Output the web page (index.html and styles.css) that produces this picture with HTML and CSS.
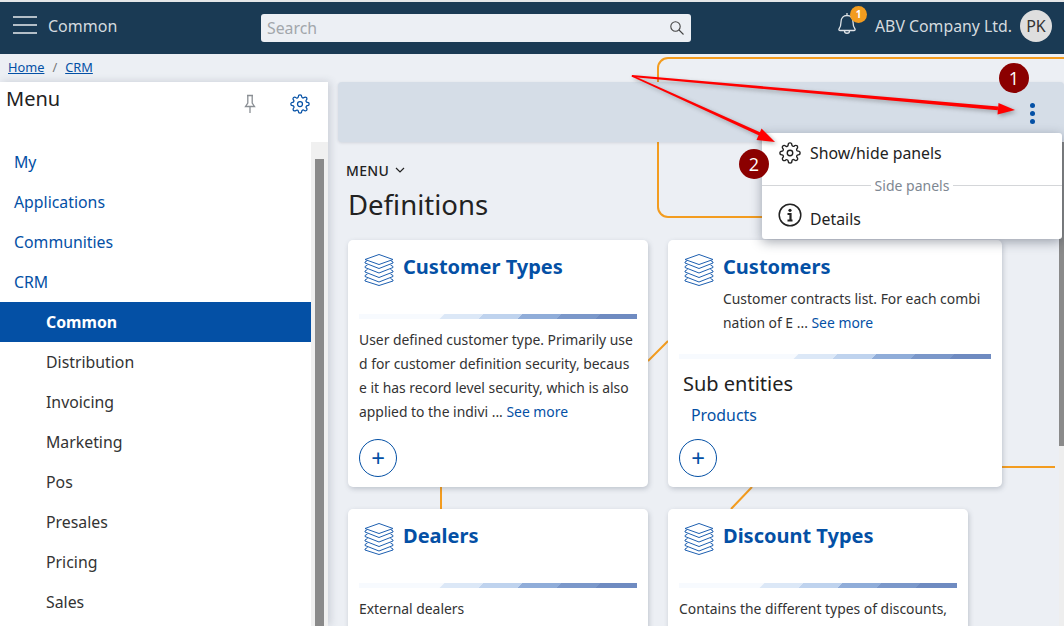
FILE: index.html
```html
<!DOCTYPE html>
<html>
<head>
  <meta charset="utf-8">
  <title>Common - Definitions</title>
  <link rel="stylesheet" href="styles.css">
</head>
<body>
  <svg class="icon-defs" width="0" height="0">
    <symbol id="gear" viewBox="0 0 24 24">
      <circle cx="12" cy="12" r="3"/>
      <path d="M19.4 15a1.65 1.65 0 0 0 .33 1.82l.06.06a2 2 0 0 1 0 2.83 2 2 0 0 1-2.83 0l-.06-.06a1.65 1.65 0 0 0-1.82-.33 1.65 1.65 0 0 0-1 1.51V21a2 2 0 0 1-2 2 2 2 0 0 1-2-2v-.09A1.65 1.65 0 0 0 9 19.4a1.65 1.65 0 0 0-1.82.33l-.06.06a2 2 0 0 1-2.83 0 2 2 0 0 1 0-2.83l.06-.06a1.65 1.65 0 0 0 .33-1.82 1.65 1.65 0 0 0-1.51-1H3a2 2 0 0 1-2-2 2 2 0 0 1 2-2h.09A1.65 1.65 0 0 0 4.6 9a1.65 1.65 0 0 0-.33-1.82l-.06-.06a2 2 0 0 1 0-2.83 2 2 0 0 1 2.83 0l.06.06a1.65 1.65 0 0 0 1.82.33H9a1.65 1.65 0 0 0 1-1.51V3a2 2 0 0 1 2-2 2 2 0 0 1 2 2v.09a1.65 1.65 0 0 0 1 1.51 1.65 1.65 0 0 0 1.82-.33l.06-.06a2 2 0 0 1 2.83 0 2 2 0 0 1 0 2.83l-.06.06a1.65 1.65 0 0 0-.33 1.82V9a1.65 1.65 0 0 0 1.51 1H21a2 2 0 0 1 2 2 2 2 0 0 1-2 2h-.09a1.65 1.65 0 0 0-1.51 1z"/>
    </symbol>
    <symbol id="stack" viewBox="0 0 30 32">
      <path d="M15 .5 29 5.5 15 10.500 1 5.500z"/>
      <path d="M3.500 6.500 1 8v1L15 14.500 29 9V8L26.500 6.500"/>
      <path d="M3.500 11 1 12.500v1L15 19 29 13.500v-1L26.500 11"/>
      <path d="M3.500 15.500 1 17v1L15 23.500 29 18v-1L26.500 15.500"/>
      <path d="M3.500 20 1 21.500v1L15 28 29 22.500v-1L26.500 20"/>
      <path d="M3.500 24.500 1 26v1L15 31.500 29 27v-1L26.500 24.500"/>
    </symbol>
  </svg>

  <!-- connector lines behind the cards -->
  <svg class="connectors" width="1064" height="626">
    <rect x="658" y="58" width="440" height="159" rx="10"/>
    <path d="M648 361 668 341M441 487V509M731 509 752 487M1002 467H1055"/>
  </svg>

  <header class="topbar">
    <div class="burger"><span></span><span></span><span></span></div>
    <div class="topbar-title">Common</div>
    <div class="search">
      <input type="text" placeholder="Search">
      <svg width="16" height="16" viewBox="0 0 16 16"><circle cx="6.500" cy="6.500" r="4.700"/><path d="M10 10l4.500 4.500"/></svg>
    </div>
    <div class="bell">
      <svg width="24" height="26" viewBox="0 3 24 26"><path d="M4 19c1.500-2 2-3.500 2-7 0-4 2.500-6.500 6-6.500s6 2.500 6 6.500c0 3.500.5 5 2 7 .5 1-.2 1.500-1 1.500H5c-.8 0-1.500-.5-1-1.500zM9.500 21c0 3 5 3 5 0M12 5.500V3"/></svg>
      <span class="bell-count">1</span>
    </div>
    <div class="company">ABV Company Ltd.</div>
    <div class="avatar">PK</div>
  </header>

  <nav class="crumbs"><a href="#">Home</a><span>/</span><a href="#">CRM</a></nav>

  <div class="page">
    <aside class="sidebar">
      <div class="side-head">
        <h2>Menu</h2>
        <svg class="pin" width="14" height="20" viewBox="0 0 14 20"><path d="M4 1.500h6M4.800 1.500V9L2.500 12.500h9L9.200 9V1.500M7 12.500V19"/></svg>
        <svg class="side-gear" width="20" height="20"><use href="#gear"/></svg>
      </div>
      <div class="side-body">
        <ul class="side-list">
          <li class="top">My</li>
          <li class="top">Applications</li>
          <li class="top">Communities</li>
          <li class="top">CRM</li>
          <li class="sub active">Common</li>
          <li class="sub">Distribution</li>
          <li class="sub">Invoicing</li>
          <li class="sub">Marketing</li>
          <li class="sub">Pos</li>
          <li class="sub">Presales</li>
          <li class="sub">Pricing</li>
          <li class="sub">Sales</li>
        </ul>
        <div class="side-scroll"><div class="side-thumb"></div></div>
      </div>
    </aside>

    <main class="main">
      <div class="panel-bar">
        <div class="dots"><i></i><i></i><i></i></div>
      </div>
      <div class="workspace">
        <div class="content">
          <div class="menu-link">MENU
            <svg width="10" height="6" viewBox="0 0 10 6"><path d="M1 1l4 4 4-4"/></svg>
          </div>
          <h1>Definitions</h1>
          <div class="cards">
            <section class="card">
              <div class="card-head">
                <svg class="stack" width="30" height="32"><use href="#stack"/></svg>
                <div class="card-titles"><h3>Customer Types</h3></div>
              </div>
              <div class="strip"></div>
              <p class="desc">User defined customer type. Primarily used for customer definition security, because it has record level security, which is also applied to the indivi ... <a href="#">See more</a></p>
              <button class="add">+</button>
            </section>

            <section class="card wide">
              <div class="card-head">
                <svg class="stack" width="30" height="32"><use href="#stack"/></svg>
                <div class="card-titles">
                  <h3>Customers</h3>
                  <p class="desc short">Customer contracts list. For each combination of E ... <a href="#">See more</a></p>
                </div>
              </div>
              <div class="strip"></div>
              <h4>Sub entities</h4>
              <a class="sub-link" href="#">Products</a>
              <button class="add">+</button>
            </section>

            <section class="card">
              <div class="card-head">
                <svg class="stack" width="30" height="32"><use href="#stack"/></svg>
                <div class="card-titles"><h3>Dealers</h3></div>
              </div>
              <div class="strip"></div>
              <p class="desc">External dealers</p>
            </section>

            <section class="card">
              <div class="card-head">
                <svg class="stack" width="30" height="32"><use href="#stack"/></svg>
                <div class="card-titles"><h3>Discount Types</h3></div>
              </div>
              <div class="strip"></div>
              <p class="desc">Contains the different types of discounts,</p>
            </section>
          </div>
        </div>
        <div class="main-scroll"><div class="main-thumb"></div></div>
      </div>
    </main>
  </div>

  <div class="popup">
    <div class="popup-item">
      <svg width="22" height="22"><use href="#gear"/></svg>
      <span>Show/hide panels</span>
    </div>
    <div class="popup-sep"><span>Side panels</span></div>
    <div class="popup-item details">
      <svg width="24" height="24" viewBox="0 0 24 24"><circle cx="12" cy="12" r="10.800"/><circle class="fill" cx="12" cy="7.300" r="1.600"/><path class="thick" d="M9.500 11h3v6.500M9.500 17.500h5"/></svg>
      <span>Details</span>
    </div>
  </div>

  <!-- screenshot annotations -->
  <svg class="arrows" width="1064" height="626">
    <path d="M632 75 998.200 106.600 997.800 110.200 632 77z"/>
    <path d="M632 75 762.800 133.400 761.300 136.600 631.500 76.500z"/>
    <path d="M1015 110 997.500 114.500 998.500 103z"/>
    <path d="M775 142 756.500 140 761.500 128.500z"/>
  </svg>
  <div class="mark mark-one">1</div>
  <div class="mark mark-two">2</div>
</body>
</html>
```

FILE: styles.css
```css
* {
  box-sizing: border-box;
}
html, body {
  height: 100%;
  margin: 0;
}
body {
  position: relative;
  overflow: hidden;
  background: #eceff4;
  color: #222;
  font-family: "Noto Sans", sans-serif;
  font-size: 15.84px;
}
a {
  color: #0450a5;
  text-decoration: none;
}
.icon-defs {
  position: absolute;
}
#gear, .side-gear, .popup-item svg {
  fill: none;
  stroke: currentColor;
  stroke-width: 1.500;
}

.connectors {
  position: absolute;
  left: 0;
  top: 0;
  fill: none;
  stroke: #f39c1f;
  stroke-width: 2;
}

/* top bar */
.topbar {
  position: relative;
  display: flex;
  align-items: center;
  height: 54px;
  padding-bottom: 4px;
  border-top: 2px solid #e4e6e8;
  background: #1a3a54;
  color: #d5dadf;
}
.burger {
  display: flex;
  flex-direction: column;
  gap: 6px;
  width: 24px;
  margin: 0 0 2px 13px;
}
.burger span {
  height: 2px;
  background: #b4bec7;
}
.topbar-title {
  width: 213px;
  margin-left: 11px;
  font-size: 16px;
}
.search {
  display: flex;
  align-items: center;
  width: 430px;
  height: 28px;
  margin-top: 4px;
  border-radius: 3px;
  background: #eceff4;
  padding: 0 6px;
}
.search input {
  flex: 1;
  min-width: 0;
  padding: 0;
  border: 0;
  outline: 0;
  background: none;
  font-family: inherit;
  font-size: 15.84px;
}
.search input::placeholder {
  color: #a2a6ab;
  opacity: 1;
}
.search svg {
  fill: none;
  stroke: #444;
  stroke-width: 1.100;
}
.bell {
  position: relative;
  width: 24px;
  height: 26px;
  margin-left: 144px;
}
.bell svg {
  fill: none;
  stroke: #dfe3e7;
  stroke-width: 1.300;
}
.bell-count {
  position: absolute;
  left: 15px;
  top: -7px;
  width: 17px;
  height: 17px;
  border-radius: 50%;
  background: #f39c1f;
  color: #fff;
  font-size: 10px;
  font-weight: 700;
  line-height: 17px;
  text-align: center;
}
.company {
  margin-left: 16px;
  white-space: nowrap;
}
.avatar {
  width: 32px;
  height: 32px;
  margin-left: 8px;
  border-radius: 50%;
  background: #dedede;
  color: #333;
  font-size: 16px;
  line-height: 32px;
  text-align: center;
}

/* breadcrumb */
.crumbs {
  position: relative;
  display: flex;
  align-items: center;
  gap: 8px;
  height: 28px;
  padding: 0 0 2px 8px;
  font-size: 12.8px;
}
.crumbs a {
  text-decoration: underline;
}
.crumbs span {
  color: #777;
}

.page {
  position: relative;
  display: flex;
  height: 544px;
}

/* left menu */
.sidebar {
  flex: none;
  width: 328px;
  background: #fff;
  box-shadow: 2px 0 8px rgba(60, 70, 90, .2);
  z-index: 1;
}
.side-head {
  display: flex;
  align-items: flex-start;
  height: 60px;
}
.side-head h2 {
  width: 237px;
  margin: 3px 0 0 6px;
  font-size: 20px;
  font-weight: 400;
  line-height: 28px;
}
.pin {
  margin-top: 12px;
  fill: none;
  stroke: #8a8f94;
  stroke-width: 1.300;
}
.side-gear {
  margin: 12px 0 0 33px;
  color: #0450a5;
}
.side-body {
  display: flex;
  height: 484px;
}
.side-list {
  flex: 1;
  margin: 0;
  padding: 0;
  list-style: none;
}
.side-list li {
  height: 40px;
  line-height: 40px;
}
.top {
  padding-left: 14px;
  color: #0450a5;
}
.sub {
  padding-left: 46px;
  color: #333;
}
.sub.active {
  background: #0450a5;
  color: #fff;
  font-weight: 700;
}
.side-scroll {
  width: 17px;
  padding: 17px 4px 0;
  background: #f0f0f0;
}
.side-thumb {
  height: 100%;
  background: #8a8a8a;
}

/* main area */
.main {
  display: flex;
  flex-direction: column;
  flex: 1;
  min-width: 0;
  margin-left: 10px;
}
.panel-bar {
  position: relative;
  flex: none;
  height: 60px;
  border-radius: 4px;
  background: #d5dde7;
  box-shadow: 0 1px 3px rgba(60, 70, 90, .15);
}
.dots {
  position: absolute;
  right: 29px;
  top: 21px;
  display: flex;
  flex-direction: column;
  gap: 3px;
}
.dots i {
  width: 5px;
  height: 5px;
  border-radius: 50%;
  background: #0450a5;
}
.workspace {
  display: flex;
  flex: 1;
  min-height: 0;
}
.content {
  flex: 1;
  min-width: 0;
  overflow: hidden;
  padding: 17px 0 0 8px;
}
.main-scroll {
  flex: none;
  width: 5px;
  background: #eee;
}
.main-thumb {
  height: 304px;
  background: #8a8a8a;
}
.menu-link {
  display: flex;
  align-items: center;
  gap: 6px;
  height: 22px;
  font-size: 14px;
  font-weight: 500;
  letter-spacing: .3px;
}
.menu-link svg {
  fill: none;
  stroke: #222;
  stroke-width: 1.200;
}
h1 {
  height: 53px;
  margin: 6px 0 0 2px;
  font-size: 27.5px;
  font-weight: 400;
  line-height: 36px;
}

/* definition cards */
.cards {
  position: relative;
  display: flex;
  flex-wrap: wrap;
  gap: 22px 20px;
  margin-left: 2px;
}
.card {
  display: flex;
  flex-direction: column;
  width: 300px;
  height: 247px;
  padding: 0 11px 10px;
  border-radius: 5px;
  background: #fff;
  box-shadow: 1px 2px 5px rgba(60, 70, 90, .25);
}
.card.wide {
  width: 334px;
}
.card-head {
  display: flex;
  min-height: 74px;
  padding: 14px 0 0 5px;
}
.wide .card-head {
  min-height: 114px;
}
.stack {
  flex: none;
  fill: none;
  stroke: #1d5fb0;
  stroke-width: 1;
}
.card-titles {
  margin-left: 9px;
  min-width: 0;
}
h3 {
  margin: 0;
  color: #0450a5;
  font-size: 20px;
  font-weight: 700;
  line-height: 26px;
}
.strip {
  display: flex;
  flex: none;
  justify-content: flex-end;
  height: 5px;
  overflow: hidden;
  background: #f7fafe;
}
.strip::after {
  content: "";
  flex: none;
  width: 200px;
  margin-right: -5px;
  transform: skewX(-45deg);
  background: linear-gradient(to right,
    #dce8f7 0 39px, #bfd3ee 39px 78px, #90add9 78px 117px,
    #7b98ca 117px 156px, #6f8bc1 156px);
}
.desc {
  margin: 9px 0 0;
  color: #333;
  font-size: 13.9px;
  line-height: 24px;
  word-break: break-all;
}
.desc.short {
  width: 262px;
  margin-top: 7px;
}
h4 {
  margin: 12px 0 0 4px;
  font-size: 20px;
  font-weight: 400;
  line-height: 26px;
}
.sub-link {
  margin: 6px 0 0 12px;
  line-height: 24px;
}
.add {
  width: 38px;
  height: 38px;
  margin-top: auto;
  padding: 0;
  border: 1px solid #0450a5;
  border-radius: 50%;
  background: #fff;
  color: #0450a5;
  font-family: inherit;
  font-size: 24px;
  line-height: 34px;
}

/* popup menu */
.popup {
  position: absolute;
  left: 762px;
  top: 133px;
  width: 300px;
  height: 106px;
  border-radius: 3px;
  background: #fff;
  box-shadow: 0 3px 12px rgba(30, 40, 60, .4);
}
.popup-item {
  display: flex;
  align-items: center;
  gap: 9px;
  height: 40px;
  padding-left: 17px;
}
.popup-item.details {
  gap: 8px;
  margin-top: 2px;
  padding-left: 16px;
}
.details svg {
  margin-bottom: 8px;
}
.popup-item .fill {
  fill: currentColor;
  stroke: none;
}
.popup-item .thick {
  stroke-width: 2.200;
}
.popup-sep {
  display: flex;
  align-items: center;
  justify-content: center;
  height: 24px;
  background: linear-gradient(#d4d6d9, #d4d6d9) center / 100% 1px no-repeat;
  color: #7e8792;
  font-size: 14px;
}
.popup-sep span {
  padding: 0 4px;
  background: #fff;
}

/* annotations */
.arrows {
  position: absolute;
  left: 0;
  top: 0;
  fill: #f00;
  filter: drop-shadow(2px 2px 2px rgba(60, 60, 60, .4));
}
.mark {
  position: absolute;
  width: 30px;
  height: 30px;
  border-radius: 50%;
  background: #8b0000;
  color: #fff;
  font-family: "Open Sans", sans-serif;
  font-size: 18px;
  line-height: 30px;
  text-align: center;
}
.mark-one {
  left: 999px;
  top: 63px;
}
.mark-two {
  left: 739px;
  top: 149px;
}
```
